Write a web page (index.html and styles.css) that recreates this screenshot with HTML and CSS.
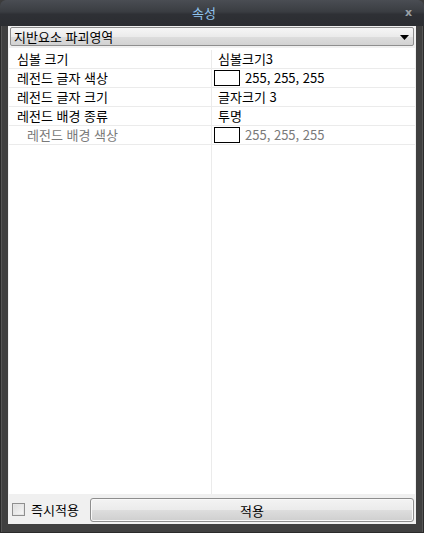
FILE: index.html
```html
<!DOCTYPE html>
<html lang="ko">
<head>
<meta charset="utf-8">
<link rel="stylesheet" href="styles.css">
</head>
<body>
<div class="window">
  <div class="titlebar">
    <span class="title">속성</span>
    <span class="close">x</span>
  </div>
  <div class="panel">
    <div class="combo">
      <span class="combo-text">지반요소 파괴영역</span>
      <svg class="combo-arrow" width="9" height="5" viewBox="0 0 9 5"><path d="M0 0H9L4.5 5Z" fill="#000"/></svg>
    </div>
    <div class="grid">
      <div class="row"><div class="cell key">심볼 크기</div><div class="cell val">심볼크기3</div></div>
      <div class="row swrow"><div class="cell key">레전드 글자 색상</div><div class="cell val"><span class="swatch"></span>255, 255, 255</div></div>
      <div class="row"><div class="cell key">레전드 글자 크기</div><div class="cell val">글자크기 3</div></div>
      <div class="row"><div class="cell key">레전드 배경 종류</div><div class="cell val">투명</div></div>
      <div class="row sub swrow"><div class="cell key">레전드 배경 색상</div><div class="cell val"><span class="swatch"></span>255, 255, 255</div></div>
      <div class="row filler"><div class="cell key"></div><div class="cell val"></div></div>
    </div>
    <div class="footer">
      <label class="check"><span class="box"></span>즉시적용</label>
      <button class="apply">적용</button>
    </div>
  </div>
</div>
</body>
</html>
```

FILE: styles.css
```css
html, body {
  margin: 0;
  padding: 0;
  background: #3c3c3c;
}
body {
  font-family: "Noto Sans CJK KR", "Noto Sans", sans-serif;
  font-size: 13px;
  color: #000;
}
.window {
  width: 424px;
  height: 533px;
  box-sizing: border-box;
  background: #404040;
  border-radius: 6px 6px 0 0;
  display: flex;
  flex-direction: column;
  padding: 0 8px 9px 8px;
  box-shadow: inset 1px 0 0 #2a2a2a, inset -1px 0 0 #2a2a2a, inset 0 -1px 0 #2a2a2a, inset 2px 0 0 #555, inset -2px 0 0 #555;
}
.titlebar {
  height: 26px;
  margin: 0 -8px;
  border-radius: 6px 6px 0 0;
  background: linear-gradient(#4a4d53 0%, #3a3d42 45%, #2e3035 55%, #2b2d31 100%);
  position: relative;
  display: flex;
  align-items: center;
  justify-content: center;
  flex: none;
}
.title {
  color: #8fc3ee;
  font-size: 13px;
  line-height: 26px;
  margin-left: -16px;
}
.close {
  position: absolute;
  right: 12px;
  top: 6px;
  color: #9aa0a6;
  font-family: "DejaVu Sans", sans-serif;
  font-weight: bold;
  font-size: 11px;
  line-height: 14px;
}
.panel {
  flex: 1;
  background: #f0f0f0;
  display: flex;
  flex-direction: column;
  min-height: 0;
}
.combo {
  margin: 1px 2px 0 2px;
  height: 19px;
  box-sizing: border-box;
  border: 1px solid #8e8e8e;
  border-radius: 2px;
  background: linear-gradient(#f6f6f6 0%, #ebebeb 50%, #dddddd 51%, #d2d2d2 100%);
  display: flex;
  align-items: center;
  padding: 0 4px 0 3px;
  flex: none;
}
.combo-text {
  flex: 1;
  font-size: 13px;
  line-height: 17px;
}
.combo-arrow {
  display: block;
  margin-top: 1px;
}
.grid {
  flex: 1;
  margin: 2px 1px 0 1px;
  padding-top: 2px;
  background: #fff;
  display: flex;
  flex-direction: column;
  min-height: 0;
}
.row {
  display: flex;
  height: 19px;
  border-bottom: 1px solid #ebebeb;
  box-sizing: border-box;
  flex: none;
}
.row.filler {
  flex: 1;
  border-bottom: none;
}
.cell {
  display: flex;
  align-items: center;
  line-height: 18px;
  white-space: nowrap;
}
.key {
  width: 203px;
  box-sizing: border-box;
  padding-left: 8px;
  border-right: 1px solid #ebebeb;
  flex: none;
}
.val {
  flex: 1;
  padding-left: 6px;
}
.swrow .val {
  padding-left: 2px;
}
.row.sub .key {
  padding-left: 18px;
  color: #7a7a7a;
}
.row.sub .val {
  color: #7a7a7a;
}
.swatch {
  width: 26px;
  height: 16px;
  box-sizing: border-box;
  border: 1px solid #000;
  background: #fff;
  margin-right: 5px;
  flex: none;
}
.footer {
  height: 30px;
  flex: none;
  display: flex;
  align-items: center;
  padding: 0 2px 0 4px;
  gap: 11px;
}
.check {
  display: flex;
  align-items: center;
  gap: 6px;
  font-size: 13px;
}
.box {
  width: 13px;
  height: 13px;
  box-sizing: border-box;
  border: 1px solid #8f8f8f;
  background: linear-gradient(135deg, #dcdcdc, #f8f8f8);
  box-shadow: inset 0 0 0 1px #e6e6e6;
}
.apply {
  flex: 1;
  height: 24px;
  margin-top: 2px;
  border: 1px solid #8e8e8e;
  border-radius: 3px;
  background: linear-gradient(#f3f3f3 0%, #ebebeb 50%, #dddddd 51%, #cfcfcf 100%);
  font-family: "Noto Sans CJK KR", "Noto Sans", sans-serif;
  font-size: 13px;
  color: #000;
  padding: 0;
  box-shadow: inset 0 0 0 1px #f8f8f8;
}
```
